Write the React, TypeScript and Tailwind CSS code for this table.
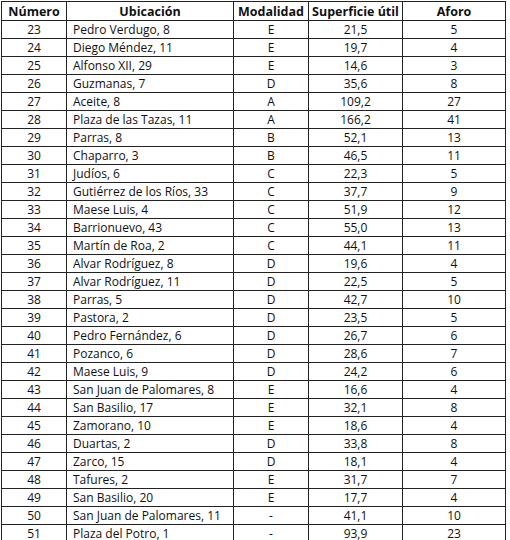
const rows: [number, string, string, string, number][] = [
  [23, 'Pedro Verdugo, 8', 'E', '21,5', 5],
  [24, 'Diego Méndez, 11', 'E', '19,7', 4],
  [25, 'Alfonso XII, 29', 'E', '14,6', 3],
  [26, 'Guzmanas, 7', 'D', '35,6', 8],
  [27, 'Aceite, 8', 'A', '109,2', 27],
  [28, 'Plaza de las Tazas, 11', 'A', '166,2', 41],
  [29, 'Parras, 8', 'B', '52,1', 13],
  [30, 'Chaparro, 3', 'B', '46,5', 11],
  [31, 'Judíos, 6', 'C', '22,3', 5],
  [32, 'Gutiérrez de los Ríos, 33', 'C', '37,7', 9],
  [33, 'Maese Luis, 4', 'C', '51,9', 12],
  [34, 'Barrionuevo, 43', 'C', '55,0', 13],
  [35, 'Martín de Roa, 2', 'C', '44,1', 11],
  [36, 'Alvar Rodríguez, 8', 'D', '19,6', 4],
  [37, 'Alvar Rodríguez, 11', 'D', '22,5', 5],
  [38, 'Parras, 5', 'D', '42,7', 10],
  [39, 'Pastora, 2', 'D', '23,5', 5],
  [40, 'Pedro Fernández, 6', 'D', '26,7', 6],
  [41, 'Pozanco, 6', 'D', '28,6', 7],
  [42, 'Maese Luis, 9', 'D', '24,2', 6],
  [43, 'San Juan de Palomares, 8', 'E', '16,6', 4],
  [44, 'San Basilio, 17', 'E', '32,1', 8],
  [45, 'Zamorano, 10', 'E', '18,6', 4],
  [46, 'Duartas, 2', 'D', '33,8', 8],
  [47, 'Zarco, 15', 'D', '18,1', 4],
  [48, 'Tafures, 2', 'E', '31,7', 7],
  [49, 'San Basilio, 20', 'E', '17,7', 4],
  [50, 'San Juan de Palomares, 11', '-', '41,1', 10],
  [51, 'Plaza del Potro, 1', '-', '93,9', 23],
];

export default function App() {
  return (
    <div className="w-[510px] h-[540px] overflow-hidden bg-white pl-px pt-px font-['Open_Sans',sans-serif] text-[12px] text-[#111]">
      <table className="table-fixed border-collapse w-[504px]">
        <colgroup>
          <col className="w-[65px]" />
          <col className="w-[167px]" />
          <col className="w-[75px]" />
          <col className="w-[94px]" />
          <col className="w-[103px]" />
        </colgroup>
        <thead>
          <tr className="h-[19px] text-[12.5px]">
            <th className="border border-[#222] leading-[17px] font-bold">Número</th>
            <th className="border border-[#222] leading-[17px] font-bold">Ubicación</th>
            <th className="border border-[#222] leading-[17px] font-bold">Modalidad</th>
            <th className="border border-[#222] leading-[17px] font-bold">Superficie útil</th>
            <th className="border border-[#222] leading-[17px] font-bold">Aforo</th>
          </tr>
        </thead>
        <tbody>
          {rows.map(([n, u, m, s, a]) => (
            <tr key={n} className="h-[18px]">
              <td className="border border-[#222] text-center leading-[16px] pt-px">{n}</td>
              <td className="border border-[#222] pl-[6px] leading-[16px] pt-px whitespace-nowrap">{u}</td>
              <td className="border border-[#222] text-center leading-[16px] pt-px">{m}</td>
              <td className="border border-[#222] text-center leading-[16px] pt-px">{s}</td>
              <td className="border border-[#222] text-center leading-[16px] pt-px">{a}</td>
            </tr>
          ))}
        </tbody>
      </table>
    </div>
  );
}
